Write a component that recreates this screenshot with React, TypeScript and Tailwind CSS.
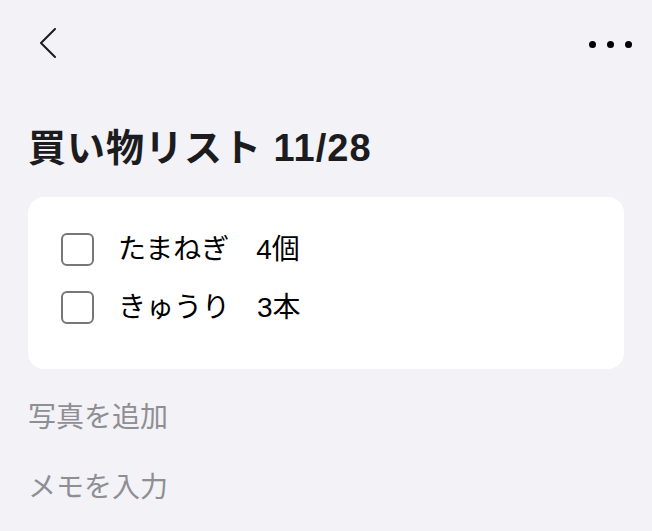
import React from 'react';

const items = [
  { name: 'たまねぎ', qty: '4個' },
  { name: 'きゅうり', qty: '3本' },
];

export default function App() {
  return (
    <div
      className="min-h-[531px] w-full bg-[#f2f2f7] text-black"
      style={{ fontFamily: '"Liberation Sans", "Noto Sans CJK JP", sans-serif' }}
    >
      <header className="flex h-[88px] items-center justify-between pl-[38px] pr-[20px]">
        <svg width="20" height="30" viewBox="0 0 20 30" fill="none" className="-mt-[2px]">
          <path d="M17 1 L3 15 L17 29" stroke="#1c1c1e" strokeWidth="2" strokeLinecap="round" strokeLinejoin="round" />
        </svg>
        <div className="flex items-center gap-[11px]">
          <span className="h-[7px] w-[7px] rounded-full bg-black" />
          <span className="h-[7px] w-[7px] rounded-full bg-black" />
          <span className="h-[7px] w-[7px] rounded-full bg-black" />
        </div>
      </header>

      <h1 className="mt-[35px] px-[28px] text-[38px] font-bold leading-[50px] tracking-[1px] text-[#1c1c1e]">
        買い物リスト 11/28
      </h1>

      <div className="mx-[28px] mt-[24px] rounded-[16px] bg-white px-[33px] pb-[45px] pt-[36px]">
        <ul className="flex flex-col gap-[25px]">
          {items.map(item => (
            <li key={item.name} className="flex h-[33px] items-center">
              <span className="h-[33px] w-[33px] rounded-[6px] border-2 border-[#777777]" />
              <span className="ml-[24px] text-[28px] leading-none">{item.name}</span>
              <span className="ml-[27px] text-[28px] leading-none">{item.qty}</span>
            </li>
          ))}
        </ul>
      </div>

      <div className="mt-[31px] px-[28px] text-[28px] leading-[36px] text-[#8e8e93]">写真を追加</div>
      <div className="mt-[34px] px-[28px] text-[28px] leading-[36px] text-[#8e8e93]">メモを入力</div>
    </div>
  );
}
